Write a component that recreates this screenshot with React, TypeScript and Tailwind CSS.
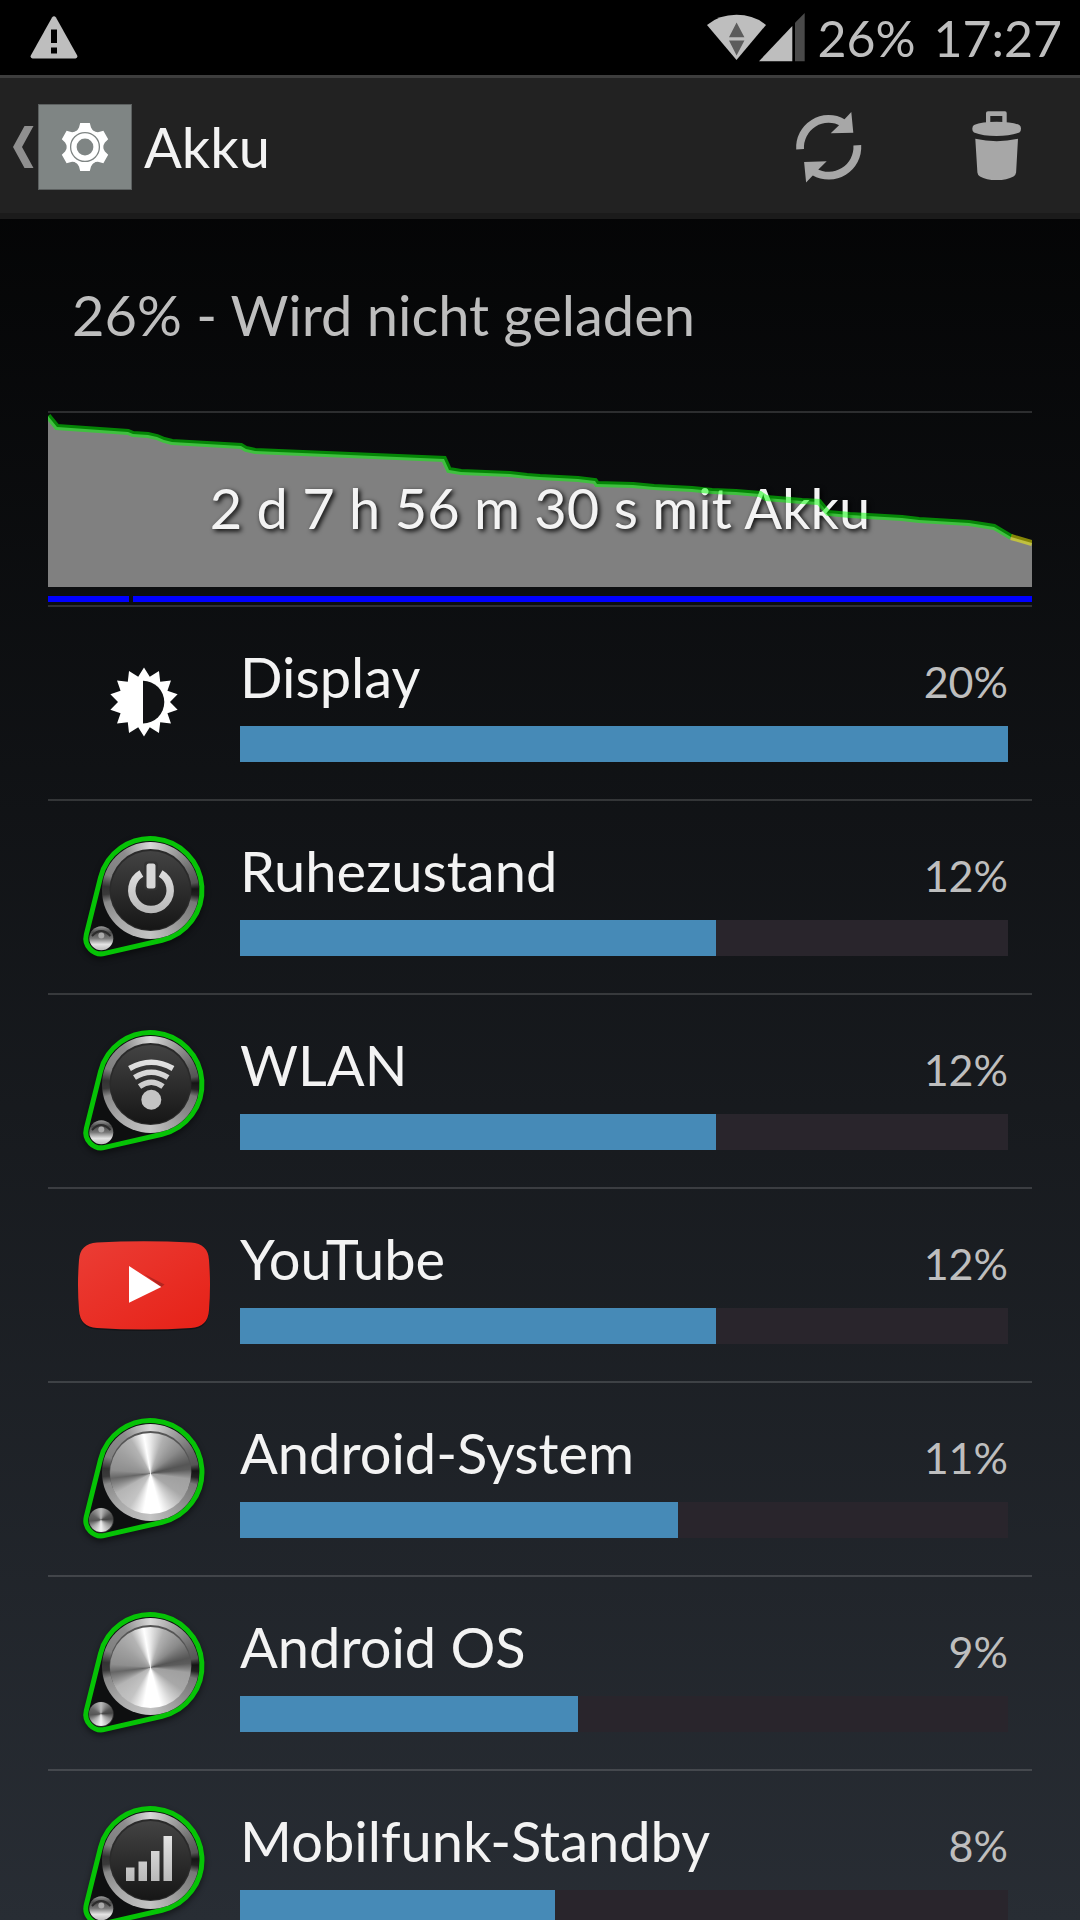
import type { ReactNode } from 'react';

interface UsageEntry {
  name: string;
  percent: number;
  // bar length relative to the biggest consumer
  fill: number;
  icon: ReactNode;
}

/* ---------- status bar icons ---------- */

function WarningIcon() {
  return (
    <svg width="48" height="44" viewBox="0 0 48 44" className="shrink-0">
      <path d="M22 1.5 Q24 -1 26 1.5 L47.2 39.5 Q48 42 45.5 42.4 H2.5 Q0 42 .8 39.5 Z" fill="#bebebe" />
      <path d="M21 13.5 h6 v13.5 h-6 z M21 31.5 h6 v6 h-6 z" fill="#000" />
    </svg>
  );
}

function NetworkIcons() {
  return (
    <svg width="102" height="75" viewBox="0 0 102 75" className="shrink-0">
      <path d="M2 25 Q14 14.8 31.5 14.8 Q49 14.8 61 25 L31.5 60 Z" fill="#bebebe" />
      <path d="M31.6 22.5 L39.4 37.3 H24 Z M24 40.5 H39.4 L31.6 55.6 Z" fill="#5c5c5c" />
      <path d="M54 61.3 L87.3 26 V61.3 Z" fill="#bebebe" />
      <path d="M90 61.3 V22.7 L99.7 13 V61.3 Z" fill="#4a4a4a" />
    </svg>
  );
}

/* ---------- action bar icons ---------- */

function SettingsIcon() {
  return (
    <svg width="92" height="84" viewBox="-46 -42 92 84">
      <g fill="#fff">
        <circle r="17.5" />
        {[0, 60, 120, 180, 240, 300].map((a) => (
          <path key={a} d="M-4.8 -24 H4.8 L6 -19.5 Q7 -17 10 -15 H-10 Q-7 -17 -6 -19.5 Z" transform={`rotate(${a})`} />
        ))}
      </g>
      <circle r="14.4" fill="none" stroke="#7f8584" strokeWidth="1.3" />
      <circle r="8.4" fill="#7f8584" />
    </svg>
  );
}

function RefreshIcon() {
  const arrow = 'M71.3 13 L73.3 33.7 L50.7 34.3 L58.5 26.7 Z';
  return (
    <svg width="96" height="96" viewBox="0 0 96 96">
      {[0, 180].map((a) => (
        <g key={a} transform={`rotate(${a} 48.7 48.3)`}>
          <path d="M20.1 50.3 A28.6 28.6 0 0 1 63 23.8" fill="none" stroke="#a7a7a7" strokeWidth="7.8" />
          <path d={arrow} fill="#a7a7a7" />
        </g>
      ))}
    </svg>
  );
}

function TrashIcon() {
  return (
    <svg width="96" height="96" viewBox="0 0 96 96" fill="#a7a7a7">
      <path
        fillRule="evenodd"
        d="M40 12.3 H57 Q58.7 12.3 58.7 14 V25 H38 V14 Q38 12.3 40 12.3 Z M42.3 17 V23.4 H54.3 V17 Z"
      />
      <path d="M26 26 Q34 22.8 48.6 22.8 Q64 22.8 71.4 26 Q73 27 73 29.7 Q73 32.4 71.4 33.5 Q62 37 48.6 37 Q35 37 26 33.5 Q24.3 32.4 24.3 29.7 Q24.3 27 26 26 Z" />
      <path d="M27.3 39.8 Q38 42.2 48.7 42.2 Q59 42.2 70 39.8 L68.1 73.5 Q67.8 76 65.5 77.4 Q59 81 48.7 81 Q38 81 32 77.4 Q29.6 76 29.4 73.5 Z" />
    </svg>
  );
}

/* ---------- list icons ---------- */

function DisplayIcon() {
  const teeth = 14;
  const points = Array.from({ length: teeth * 2 }, (_, i) => {
    const angle = (i * Math.PI) / teeth;
    const r = i % 2 === 0 ? 34.5 : 26;
    return `${72 + r * Math.sin(angle)},${71 - r * Math.cos(angle)}`;
  }).join(' ');
  return (
    <svg width="144" height="144" viewBox="0 0 144 144">
      <polygon points={points} fill="#fff" />
      <path d="M71 49.8 A21.3 21.3 0 0 1 71 92.4 Z" fill="#111214" />
    </svg>
  );
}

function YouTubeIcon() {
  return (
    <svg width="144" height="144" viewBox="0 0 144 144">
      <defs>
        <linearGradient id="yt" x1="0" y1="0" x2="1" y2="1">
          <stop offset="0" stopColor="#eb3d35" />
          <stop offset="1" stopColor="#e62117" />
        </linearGradient>
      </defs>
      <path
        d="M25 29.5 Q72 27 119 29.5 Q136 30.5 137 47 Q139 72 137 97 Q136 114 119 115 Q72 118 25 115 Q8 114 7 97 Q5 72 7 47 Q8 30.5 25 29.5 Z"
        fill="#00000055"
        transform="translate(0 1.5)"
      />
      <path
        d="M25 29.5 Q72 27 119 29.5 Q136 30.5 137 47 Q139 72 137 97 Q136 114 119 115 Q72 118 25 115 Q8 114 7 97 Q5 72 7 47 Q8 30.5 25 29.5 Z"
        fill="url(#yt)"
      />
      <path d="M72 61 L92.5 71.5 L89.3 74 Z" fill="#b3251f" />
      <path d="M57 53 L89.3 74 L57 89.7 Z" fill="#fff" />
    </svg>
  );
}

const PIN = 'M28.5 52.5 A51.5 51.5 0 1 1 90.1 115.2 L32.8 128.4 A15.5 15.5 0 0 1 14.3 109.5 Z';

// Metal dial in a green drop outline, the glyph sits on its dark face
function DialIcon({ children }: { children?: ReactNode }) {
  return (
    <svg width="144" height="144" viewBox="0 0 144 144">
      <defs>
        <linearGradient id="face" x1="0" y1="0" x2="0" y2="1">
          <stop offset="0" stopColor="#434343" />
          <stop offset="1" stopColor="#161616" />
        </linearGradient>
        <linearGradient id="glyph" x1="0" y1="36" x2="0" y2="92" gradientUnits="userSpaceOnUse">
          <stop offset="0" stopColor="#e8e8e8" />
          <stop offset="1" stopColor="#b4b4b4" />
        </linearGradient>
        <linearGradient id="ball" x1="0" y1="0" x2="0" y2="1">
          <stop offset="0" stopColor="#9a9a9a" />
          <stop offset=".25" stopColor="#4a4a4a" />
          <stop offset=".5" stopColor="#777" />
          <stop offset=".75" stopColor="#e4e4e4" />
          <stop offset="1" stopColor="#bbb" />
        </linearGradient>
        <filter id="soft" x="-20%" y="-20%" width="140%" height="140%">
          <feGaussianBlur stdDeviation="3" />
        </filter>
      </defs>
      <path d={PIN} fill="#000" stroke="#000" strokeWidth="5" opacity=".5" filter="url(#soft)" transform="translate(0 3)" />
      <path d={PIN} fill="#0e0f10" stroke="#06c306" strokeWidth="5" />
      <foreignObject x="30" y="17" width="97" height="97">
        <div className="h-full w-full rounded-full bg-[conic-gradient(#d8d8d8_0deg,#999_35deg,#666_65deg,#555_80deg,#151515_88deg,#222_96deg,#777_105deg,#8a8a8a_130deg,#c4c4c4_180deg,#a8a8a8_225deg,#888_255deg,#3a3a3a_265deg,#333_275deg,#808080_290deg,#8c8c8c_325deg,#d8d8d8_360deg)]" />
      </foreignObject>
      {children ? (
        <>
          <circle cx="78.5" cy="65" r="41" fill="#2a2a2a" />
          <circle cx="78.5" cy="65.5" r="39.5" fill="url(#face)" />
          {children}
          <circle cx="29.3" cy="113.3" r="12" fill="url(#ball)" />
          <path d="M20 111 Q29 101 38.5 111" fill="none" stroke="#2c2c2c" strokeWidth="2" />
          <circle cx="29.3" cy="110.5" r="3" fill="#aaa" />
        </>
      ) : (
        <>
          <circle cx="78.5" cy="65" r="41" fill="#555" />
          <foreignObject x="38" y="26" width="81" height="81">
            <div className="h-full w-full rounded-full bg-[conic-gradient(#e8e8e8_0deg,#b0b0b0_20deg,#8a8a8a_50deg,#555_76deg,#5c5c5c_84deg,#a0a0a0_98deg,#a8a8a8_125deg,#d0d0d0_145deg,#fff_165deg,#fff_190deg,#c4c4c4_212deg,#b4b4b4_240deg,#666_263deg,#8e8e8e_275deg,#a0a0a0_305deg,#b4b4b4_330deg,#fff_350deg,#e8e8e8_360deg)]" />
          </foreignObject>
          <circle cx="29.3" cy="113.3" r="12.5" fill="#333" />
          <foreignObject x="17" y="101" width="24" height="24">
            <div className="h-full w-full rounded-full bg-[conic-gradient(#bbb_0deg,#555_60deg,#444_85deg,#999_120deg,#f4f4f4_180deg,#aaa_230deg,#555_265deg,#666_300deg,#bbb_360deg)]" />
          </foreignObject>
        </>
      )}
    </svg>
  );
}

function PowerGlyph() {
  return (
    <g>
      <path d="M69.4 48.6 A19.2 19.2 0 1 0 88.6 48.6" fill="none" stroke="url(#glyph)" strokeWidth="7.5" />
      <rect x="72" y="36.5" width="14" height="29" rx="4" fill="#333" />
      <rect x="74.5" y="38.5" width="9" height="25" rx="2.5" fill="#d8d8d8" />
    </g>
  );
}

function WifiGlyph() {
  return (
    <g>
      <path
        d="M57.5 49.5 Q79.3 37 101 49.5 M62.5 58.5 Q79.3 48 96 58.5 M67.5 67.5 Q79.3 59 91 67.5"
        fill="none"
        stroke="url(#glyph)"
        strokeWidth="5.5"
      />
      <circle cx="79.3" cy="80.7" r="10" fill="#c4c4c4" />
    </g>
  );
}

function SignalGlyph() {
  return (
    <path
      d="M54 72.5 h8.5 V86 h-8.5 z M66.5 66.5 h8.5 V86 h-8.5 z M79 56 h8.5 V86 h-8.5 z M91.5 41 h8.5 V86 h-8.5 z"
      fill="url(#glyph)"
    />
  );
}

/* ---------- battery history ---------- */

const LEVELS =
  '0,5 9,16 80,21 85,23 100,24 109,26 116,29 124,31 193,35 198,38 207,40 396,48 401,59 413,61 462,63 479,65 492,66 530,68 547,70 549,73 585,74 606,76 644,78 664,80 688,81 712,83 718,87 754,90 771,91 780,102 802,104 854,107 871,109 921,112 946,116 953,120 963,126';

function BatteryHistory() {
  return (
    <div className="grid h-[196px] border-y-2 border-white/15 *:[grid-area:1/1]">
      <svg viewBox="0 2 984 192" preserveAspectRatio="none" className="h-[192px] w-full">
        <polygon points={`0,176 ${LEVELS} 984,132 984,176`} fill="#808080" />
        <rect x="0" y="185" width="81" height="6" fill="#00f" />
        <rect x="85" y="185" width="899" height="6" fill="#00f" />
      </svg>
      <p className="self-center pb-0.5 text-center text-[56px] leading-[64px] text-[#f3f3f3] [text-shadow:2px_2px_5px_#000]">
        2 d 7 h 56 m 30 s mit Akku
      </p>
      {/* level line is translucent and runs above the caption */}
      <svg viewBox="0 2 984 192" preserveAspectRatio="none" className="h-[192px] w-full">
        <polyline points={LEVELS} fill="none" stroke="#00ff0080" strokeWidth="6" />
        <polyline points="963,126 984,132" fill="none" stroke="#ffff0080" strokeWidth="6" />
      </svg>
    </div>
  );
}

const entries: UsageEntry[] = [
  { name: 'Display', percent: 20, fill: 100, icon: <DisplayIcon /> },
  { name: 'Ruhezustand', percent: 12, fill: 62, icon: <DialIcon><PowerGlyph /></DialIcon> },
  { name: 'WLAN', percent: 12, fill: 62, icon: <DialIcon><WifiGlyph /></DialIcon> },
  { name: 'YouTube', percent: 12, fill: 62, icon: <YouTubeIcon /> },
  { name: 'Android-System', percent: 11, fill: 57, icon: <DialIcon /> },
  { name: 'Android OS', percent: 9, fill: 44, icon: <DialIcon /> },
  { name: 'Mobilfunk-Standby', percent: 8, fill: 41, icon: <DialIcon><SignalGlyph /></DialIcon> },
];

function UsageRow({ entry }: { entry: UsageEntry }) {
  return (
    <li className="flex items-center border-b-2 border-white/15 px-6">
      <div className="mr-6 shrink-0">{entry.icon}</div>
      <div className="min-w-0 flex-1 pt-[38px] pb-[37px]">
        <div className="mb-[17px] flex items-baseline justify-between">
          <span className="text-[56px] leading-[64px] text-[#f3f3f3]">{entry.name}</span>
          <span className="text-[43px] leading-none text-[#bebebe]">{entry.percent}%</span>
        </div>
        <div
          role="progressbar"
          aria-label={entry.name}
          aria-valuenow={entry.percent}
          className="h-9 bg-[#29252c]"
        >
          <div className="h-full bg-[#468ab7]" style={{ width: `${entry.fill}%` }} />
        </div>
      </div>
    </li>
  );
}

export default function App() {
  return (
    <div className="flex h-screen flex-col overflow-hidden bg-linear-to-b/srgb from-black to-[#282d34] font-['Lato',sans-serif]">
      {/* Status bar */}
      <div className="flex h-[75px] shrink-0 items-center justify-between bg-black pr-[18px] pl-[30px] text-[#bebebe]">
        <WarningIcon />
        <div className="flex items-center text-[50px] leading-[64px]">
          <NetworkIcons />
          <span className="ml-2.5">26%</span>
          <span className="ml-[18px]">17:27</span>
        </div>
      </div>

      {/* Action bar */}
      <header className="flex h-36 shrink-0 items-center border-t-3 border-b-6 border-t-[#3d3d3d] border-b-[#1b1b1b] bg-[#222] pt-[3px]">
        <button type="button" aria-label="Zurück" className="flex items-center pl-3">
          <svg width="26" height="44" viewBox="0 0 26 44">
            <path d="M12.5 1 H21.5 L10 22 L21.5 43 H12.5 L1 22 Z" fill="#8f8f8f" />
          </svg>
          <span className="border border-[#5c6060] bg-[#7f8584]">
            <SettingsIcon />
          </span>
        </button>
        <h1 className="ml-3 flex-1 text-[56px] leading-[64px] text-[#f3f3f3]">Akku</h1>
        <button type="button" aria-label="Aktualisieren" className="flex w-[168px] justify-center">
          <RefreshIcon />
        </button>
        <button type="button" aria-label="Löschen" className="flex w-[168px] justify-center">
          <TrashIcon />
        </button>
      </header>

      <main className="min-h-0 flex-1 overflow-y-auto px-12 [scrollbar-width:none]">
        <h2 className="px-6 pt-16 pb-16 text-[56px] leading-[64px] text-[#bebebe]">26% - Wird nicht geladen</h2>
        <BatteryHistory />
        <ul>
          {entries.map((entry) => (
            <UsageRow key={entry.name} entry={entry} />
          ))}
        </ul>
      </main>
    </div>
  );
}
